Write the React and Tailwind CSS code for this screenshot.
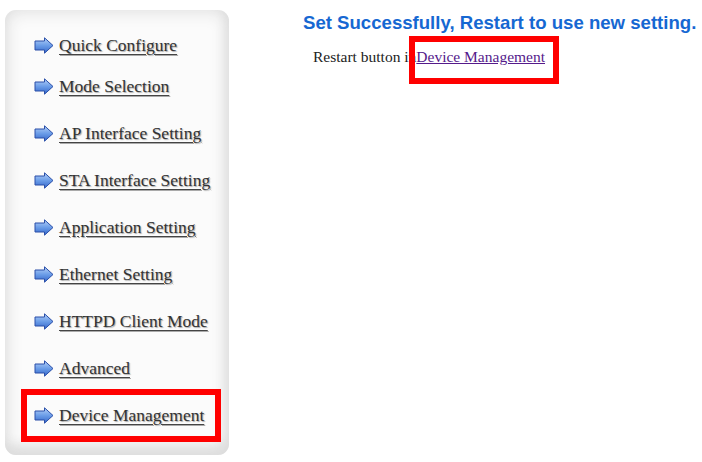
import React from "react";

const items = [
  "Quick Configure",
  "Mode Selection",
  "AP Interface Setting",
  "STA Interface Setting",
  "Application Setting",
  "Ethernet Setting",
  "HTTPD Client Mode",
  "Advanced",
  "Device Management",
];

function Arrow() {
  return (
    <svg width="20" height="17" viewBox="0 0 20 17" className="shrink-0">
      <defs>
        <linearGradient id="ag" x1="0" y1="0" x2="0" y2="1">
          <stop offset="0" stopColor="#b5d0f7" />
          <stop offset="0.5" stopColor="#6b9de8" />
          <stop offset="1" stopColor="#3466c9" />
        </linearGradient>
      </defs>
      <path
        d="M1 4 H10.5 V0.8 L19 8.5 L10.5 16.2 V13 H1 Z"
        fill="url(#ag)"
        stroke="#2a4fa8"
        strokeWidth="1"
        strokeLinejoin="round"
      />
    </svg>
  );
}

export default function App() {
  return (
    <div className="w-[702px] h-[462px] bg-white flex relative overflow-hidden">
      <div className="ml-[5px] mt-[10px] w-[224px] h-[445px] rounded-[11px] bg-[#fbfbfb] shadow-[inset_0_0_18px_#d9d9d9,inset_-3px_-10px_12px_#e4e4e4] flex flex-col pt-[24px] pl-[29px]">
        {items.map((t, i) => (
          <div
            key={t}
            className={`flex items-center gap-[5px] h-[22px] ${i === 0 ? "" : i === 1 ? "mt-[19px]" : "mt-[25px]"}`}
          >
            <Arrow />
            <a
              href="#"
              className="text-[17.5px] text-[#333] underline underline-offset-[3px] decoration-[#444] [text-shadow:1px_1px_1px_#aaa] whitespace-nowrap"
              style={{ fontFamily: '"Liberation Serif", Georgia, serif' }}
            >
              {t}
            </a>
          </div>
        ))}
      </div>
      <div className="flex flex-col pl-[74px] pt-[12px]">
        <div
          className="text-[18.6px] font-bold text-[#1668d2] whitespace-nowrap leading-[22px]"
          style={{ fontFamily: '"Liberation Sans", Arial, sans-serif' }}
        >
          Set Successfully, Restart to use new setting.
        </div>
        <div
          className="mt-[14px] ml-[10px] text-[15.5px] text-[#222] whitespace-nowrap leading-[18px]"
          style={{ fontFamily: '"Liberation Serif", Georgia, serif' }}
        >
          Restart button in<a href="#" className="text-[#551a8b] underline">Device Management</a>
        </div>
      </div>
      <div className="absolute left-[21px] top-[389px] w-[200px] h-[53px] border-[6px] border-[#ff0000]" />
      <div className="absolute left-[409px] top-[36px] w-[150px] h-[48px] border-[6px] border-[#ff0000]" />
    </div>
  );
}
